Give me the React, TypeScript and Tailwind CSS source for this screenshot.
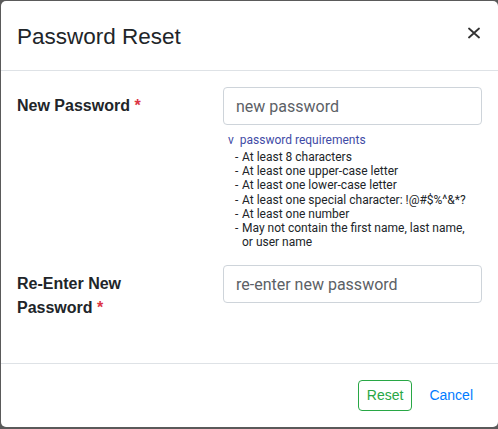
import React from "react";

const requirements: string[][] = [
  ["At least 8 characters"],
  ["At least one upper-case letter"],
  ["At least one lower-case letter"],
  ["At least one special character: !@#$%^&*?"],
  ["At least one number"],
  ["May not contain the first name, last name,", "or user name"],
];

function Required() {
  return <span className="text-[#dc3545]">&nbsp;*</span>;
}

function PasswordRequirements() {
  return (
    <div className="font-['Roboto',sans-serif] text-[12px] leading-[14.15px]">
      <div className="mt-[8px] pl-[5px] text-[#3f4ba6]">
        v&nbsp;&nbsp;password requirements
      </div>
      <ul className="mt-[3px] pl-3 text-[#212529]">
        {requirements.map((lines, i) => (
          <li key={i} className="flex">
            <span className="w-[7px] shrink-0">-</span>
            <span>
              {lines.map((l, j) => (
                <React.Fragment key={j}>
                  {j > 0 && <br />}
                  {l}
                </React.Fragment>
              ))}
            </span>
          </li>
        ))}
      </ul>
    </div>
  );
}

function PasswordInput({ placeholder }: { placeholder: string }) {
  return (
    <input
      type="password"
      placeholder={placeholder}
      className="w-full h-[38px] px-3 rounded-[4px] border border-[#ced4da] bg-white font-['Roboto',sans-serif] text-[16px] text-[#495057] placeholder:text-[#5c6166] outline-none"
    />
  );
}

export default function App() {
  return (
    <div className="w-[498px] h-[429px] overflow-hidden bg-[#5a5a5a] pt-px pl-px font-['Liberation_Sans',Arial,sans-serif] text-[#212529]">
      <div className="w-[497px] bg-white rounded-[5px]">
        {/* header */}
        <div className="h-[70px] flex items-start justify-between px-4 pt-[18px] border-b border-[#dee2e6]">
          <h5 className="text-[22.5px] leading-[36px] font-normal">Password Reset</h5>
          <button aria-label="close" className="mt-[8px] mr-[2px]">
            <svg width="12" height="12" viewBox="0 0 12 12">
              <path d="M1 1.5L11 10.5M11 1.5L1 10.5" stroke="#333" strokeWidth="1.8" strokeLinecap="round" />
            </svg>
          </button>
        </div>

        {/* body */}
        <div className="px-4 pt-4 pb-[43px]">
          <div className="grid grid-cols-[206px_259px] mb-4">
            <label className="pt-[7px] pr-[30px] text-[16px] leading-6 font-bold">
              <span className="whitespace-nowrap">
                New Password<Required />
              </span>
            </label>
            <div>
              <PasswordInput placeholder="new password" />
              <PasswordRequirements />
            </div>
          </div>
          <div className="grid grid-cols-[206px_259px]">
            <label className="pt-[7px] pr-[30px] text-[16px] leading-6 font-bold flex flex-col">
              <span>Re-Enter New</span>
              <span className="whitespace-nowrap">
                Password<Required />
              </span>
            </label>
            <div>
              <PasswordInput placeholder="re-enter new password" />
            </div>
          </div>
        </div>

        {/* footer */}
        <div className="flex justify-end items-center gap-2 px-4 pt-4 pb-4 border-t border-[#dee2e6]">
          <button className="px-2 py-1 text-[14px] leading-[21px] rounded-[4px] border border-[#28a745] text-[#28a745]">
            Reset
          </button>
          <button className="px-2 py-1 text-[14px] leading-[21px] border border-transparent text-[#007bff]">
            Cancel
          </button>
        </div>
      </div>
    </div>
  );
}
